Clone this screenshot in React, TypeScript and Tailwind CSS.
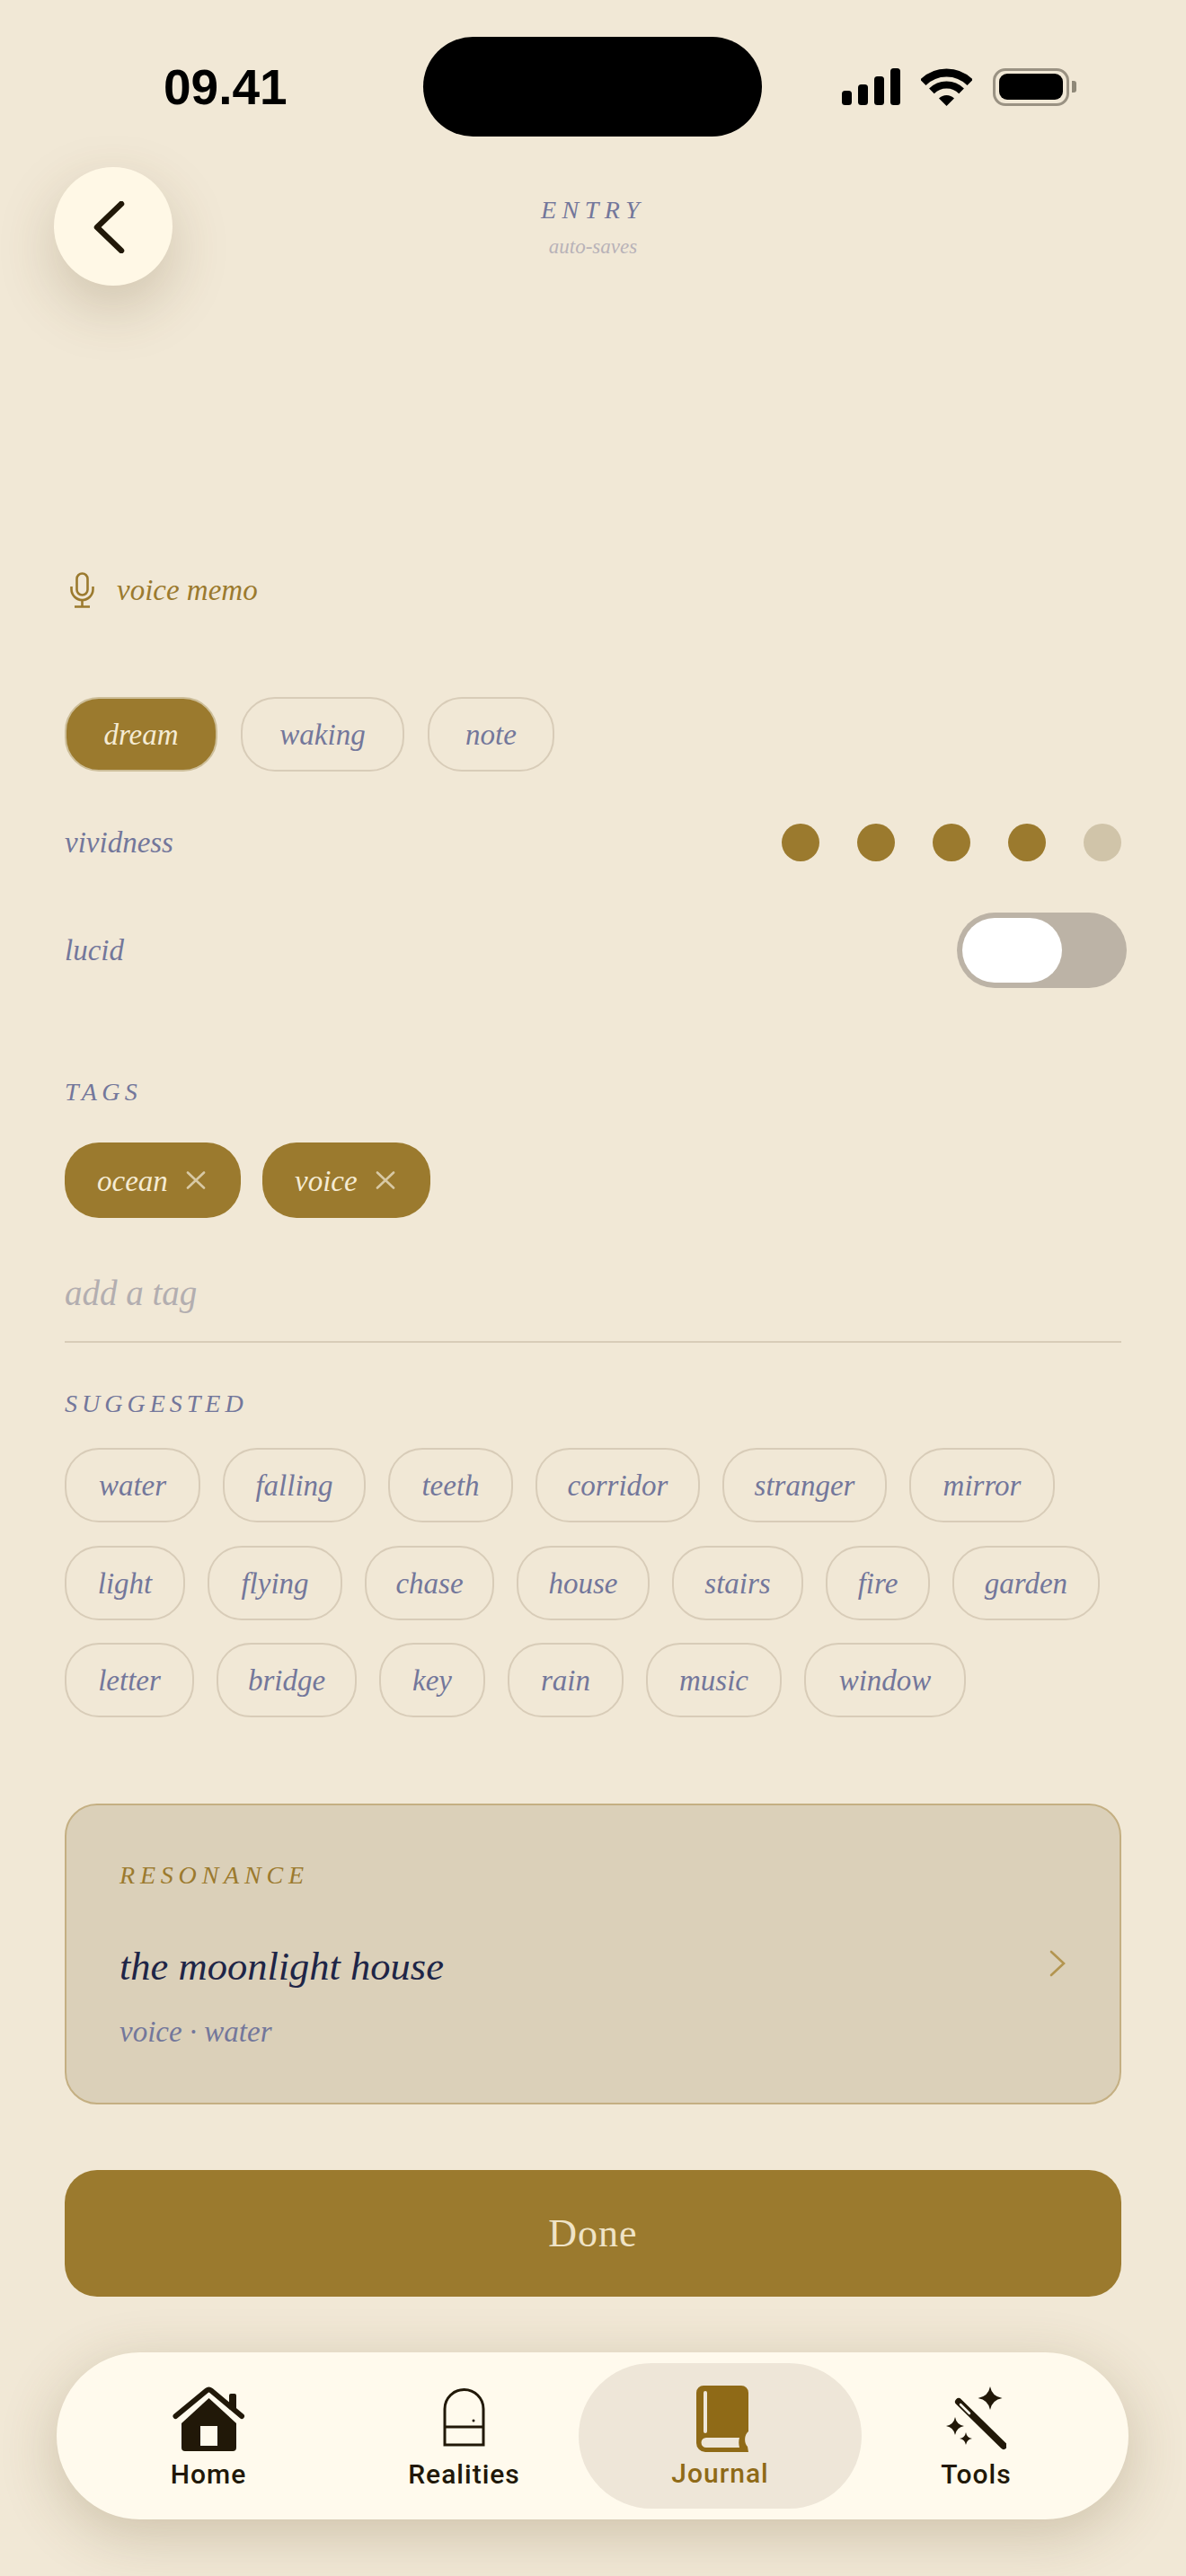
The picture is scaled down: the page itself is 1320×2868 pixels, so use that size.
const suggested = [
  [
    { label: "water", width: "w-[151px]" },
    { label: "falling", width: "w-[159px]" },
    { label: "teeth", width: "w-[139px]" },
    { label: "corridor", width: "w-[183px]" },
    { label: "stranger", width: "w-[183px]" },
    { label: "mirror", width: "w-[162px]" },
  ],
  [
    { label: "light", width: "w-[134px]" },
    { label: "flying", width: "w-[150px]" },
    { label: "chase", width: "w-[144px]" },
    { label: "house", width: "w-[148px]" },
    { label: "stairs", width: "w-[146px]" },
    { label: "fire", width: "w-[116px]" },
    { label: "garden", width: "w-[164px]" },
  ],
  [
    { label: "letter", width: "w-[144px]" },
    { label: "bridge", width: "w-[156px]" },
    { label: "key", width: "w-[118px]" },
    { label: "rain", width: "w-[129px]" },
    { label: "music", width: "w-[151px]" },
    { label: "window", width: "w-[180px]" },
  ],
];

const Chip = ({ label, width, active }: { label: string; width: string; active?: boolean }) => (
  <div
    className={`flex h-[83px] items-center justify-center rounded-[38px] border-2 pt-[3px] text-[33px] ${width} ${
      active ? "border-[#CDBE99] bg-[#9B7A2E] text-[#F5EBD3]" : "border-[#D8CCB8] text-[#73779B]"
    }`}
  >
    {label}
  </div>
);

const TagChip = ({ label, width }: { label: string; width: string }) => (
  <div className={`flex h-[84px] items-center justify-between rounded-[38px] bg-[#9B7A2E] pl-[36px] pr-[39px] text-[33px] text-[#F5EBD3] ${width}`}>
    <span className="pt-[3px]">{label}</span>
    <svg width="22" height="20" viewBox="0 0 22 20" fill="none" stroke="#D8C9A5" strokeWidth="2.6" strokeLinecap="round">
      <path d="M2 1.500 20 18.500M20 1.500 2 18.500" />
    </svg>
  </div>
);

const StatusBar = () => (
  <div className="flex h-[186px] items-start pl-[182px] pt-[41px]">
    <div className="flex h-[111px] w-[289px] items-center pt-[2px] font-['Liberation_Sans',sans-serif] text-[55px] font-bold not-italic text-black">
      09.41
    </div>
    <div className="h-[111px] w-[377px] rounded-full bg-black" />
    <div className="ml-[89px] flex h-[111px] items-center gap-[23px]">
      <svg width="65" height="41" viewBox="0 0 65 41" fill="#000">
        <rect x="0" y="25" width="11" height="16" rx="3.5" />
        <rect x="18" y="18" width="11" height="23" rx="3.5" />
        <rect x="36" y="9" width="11" height="32" rx="3.5" />
        <rect x="54" y="0" width="11" height="41" rx="3.5" />
      </svg>
      <svg width="57" height="42" viewBox="0 0 57 42" fill="none" stroke="#000">
        <path d="M2.3 15.8A37 37 0 0 1 54.7 15.8" strokeWidth="9" />
        <path d="M11.9 25.4A23.5 23.5 0 0 1 45.1 25.4" strokeWidth="8" />
        <path d="M28.5 42 20 33.5A12 12 0 0 1 37 33.5Z" fill="#000" stroke="none" />
      </svg>
      <div className="flex items-center">
        <div className="flex h-[42px] w-[85px] items-center justify-center rounded-[14px] border-[3px] border-[#9A9283]">
          <div className="h-[29px] w-[71px] rounded-[9px] bg-black" />
        </div>
        <div className="ml-[3px] h-[13px] w-[5px] rounded-r-[3px] bg-[#8F8878]" />
      </div>
    </div>
  </div>
);

const NavBar = () => (
  <div className="absolute left-[63px] top-[2619px] grid h-[186px] w-[1193px] grid-cols-[284px_285px_285px_285px] items-center rounded-[93px] bg-[#FFFAED] pl-[27px] font-['Roboto',sans-serif] text-[30px] font-medium not-italic leading-[36px] tracking-[1px] text-[#211808] shadow-[0_16px_64px_rgba(90,70,30,0.24)]">
    <div className="flex flex-col items-center pt-[6px]">
      <svg width="81" height="72" viewBox="0 0 81 72" fill="#211808">
        <path d="M40.5 13 71 41V68a4 4 0 0 1-4 4H14a4 4 0 0 1-4-4V41Z" />
        <path d="M3.500 33 40.500 4 77 33" fill="none" stroke="#FFFAED" strokeWidth="10" />
        <rect x="63" y="8" width="8" height="18" rx="2" />
        <path d="M3.500 33 38 4.500a4 4 0 0 1 5 0L77 33" fill="none" stroke="#211808" strokeWidth="6" strokeLinecap="round" />
        <rect x="31" y="44" width="19" height="22" fill="#FFFAED" />
      </svg>
      <span className="mt-[8px]">Home</span>
    </div>
    <div className="flex flex-col items-center pt-[6px]">
      <svg width="47" height="72" viewBox="0 0 47 72" fill="none" stroke="#211808" strokeWidth="3">
        <path d="M2 65V25a21.500 21.500 0 0 1 43 0V65Z" />
        <path d="M2 45H45" />
        <circle cx="34" cy="38" r="1.500" fill="#211808" stroke="none" />
      </svg>
      <span className="mt-[8px]">Realities</span>
    </div>
    <div className="-mx-[15px] flex h-[162px] flex-col items-center justify-center rounded-[81px] bg-[#EEE6D8] pt-[4px] text-[#8F6A17]">
      <svg className="ml-[5px]" width="58" height="74" viewBox="0 0 58 74" fill="#8F6A17">
        <path d="M8 0H50a8 8 0 0 1 8 8V51c-5 4-5 13-1 17l1 6H10A10 10 0 0 1 0 64V8A8 8 0 0 1 8 0Z" />
        <path d="M11 58H48c-1 3-1 7 0 11H11a5.500 5.500 0 0 1 0-11Z" fill="#EEE6D8" />
        <rect x="8" y="6" width="4" height="47" rx="2" fill="#EEE6D8" />
      </svg>
      <span className="mt-[6px]">Journal</span>
    </div>
    <div className="flex flex-col items-center pt-[6px]">
      <svg width="67" height="72" viewBox="0 0 67 72" fill="#211808">
        <path d="M14 17 64 66" stroke="#211808" strokeWidth="8" strokeLinecap="round" />
        <path d="M16 20 26 30" stroke="#FFFAED" strokeWidth="2.500" strokeLinecap="round" />
        <path d="M49 0Q51 11 62.500 13 51 15 49 26 47 15 35.500 13 47 11 49 0Z" />
        <path d="M10 34Q11.500 42.500 20 44 11.500 45.500 10 54 8.500 45.500 0 44 8.500 42.500 10 34Z" />
        <path d="M22 51Q23 57 29 58 23 59 22 65 21 59 15 58 21 57 22 51Z" />
      </svg>
      <span className="mt-[8px]">Tools</span>
    </div>
  </div>
);

export default function App() {
  return (
    <div className="relative h-[2868px] w-full overflow-hidden bg-[#F1E8D6] font-['Liberation_Serif',serif] italic">
      <StatusBar />

      <div className="grid h-[132px] grid-cols-[132px_1fr_132px] px-[60px]">
        <button className="flex h-[132px] w-[132px] items-center justify-center rounded-full bg-[#FFF8E6] pt-[2px] shadow-[0_24px_64px_rgba(90,70,30,0.22)]">
          <svg className="mr-[11px]" width="40" height="58" viewBox="0 0 40 58" fill="none" stroke="#211808" strokeWidth="6.500" strokeLinecap="round" strokeLinejoin="round">
            <path d="M34 3 7 29l27 26" />
          </svg>
        </button>
        <div className="flex flex-col items-center pt-[32px]">
          <div className="text-[28px] leading-[32px] tracking-[6.5px] text-[#73779B]">ENTRY</div>
          <div className="mt-[10px] text-[23px] leading-[30px] text-[#B8B2B8]">auto-saves</div>
        </div>
        <div />
      </div>

      <div className="px-[72px]">
        <div className="mt-[319px] flex h-[40px] items-center gap-[25px] pl-[6px] text-[33px] text-[#9B7A2E]">
          <svg width="27" height="40" viewBox="0 0 27 40" fill="none" stroke="#9B7A2E" strokeWidth="2.600">
            <rect x="7.500" y="1.500" width="12" height="24" rx="6" />
            <path d="M1.500 16v3a12 12 0 0 0 24 0v-3M13.500 31v7M5 38.500H22" />
          </svg>
          <span className="pt-[2px]">voice memo</span>
        </div>

        <div className="mt-[99px] flex gap-[26px]">
          <Chip label="dream" width="w-[170px]" active />
          <Chip label="waking" width="w-[182px]" />
          <Chip label="note" width="w-[141px]" />
        </div>

        <div className="mt-[37px] flex h-[84px] items-center justify-between text-[33px] text-[#73779B]">
          <span className="pt-[2px]">vividness</span>
          <div className="flex gap-[42px]">
            <div className="h-[42px] w-[42px] rounded-full bg-[#9B7A2E]" />
            <div className="h-[42px] w-[42px] rounded-full bg-[#9B7A2E]" />
            <div className="h-[42px] w-[42px] rounded-full bg-[#9B7A2E]" />
            <div className="h-[42px] w-[42px] rounded-full bg-[#9B7A2E]" />
            <div className="h-[42px] w-[42px] rounded-full bg-[#D0C4A9]" />
          </div>
        </div>

        <div className="mt-[36px] flex h-[84px] items-center justify-between text-[33px] text-[#73779B]">
          <span className="pt-[2px]">lucid</span>
          <div className="-mr-[6px] flex h-[84px] w-[189px] items-center rounded-full bg-[#BCB3A6] pl-[6px]">
            <div className="h-[72px] w-[111px] rounded-full bg-white" />
          </div>
        </div>

        <div className="mt-[104px] text-[28px] leading-[24px] tracking-[5.3px] text-[#73779B]">TAGS</div>
        <div className="mt-[44px] flex gap-[24px]">
          <TagChip label="ocean" width="w-[196px]" />
          <TagChip label="voice" width="w-[187px]" />
        </div>
        <div className="flex h-[139px] items-end border-b-2 border-[#D8CCB8] pb-[30px] text-[39px] leading-[46px] text-[#B3AEB0]">
          add a tag
        </div>

        <div className="mt-[56px] text-[28px] leading-[24px] tracking-[5px] text-[#73779B]">SUGGESTED</div>
        <div className="mt-[37px] flex flex-col gap-[25.5px]">
          {suggested.map((row, i) => (
            <div key={i} className="flex gap-[25px]">
              {row.map((c) => (
                <Chip key={c.label} label={c.label} width={c.width} />
              ))}
            </div>
          ))}
        </div>

        <div className="mt-[96px] flex h-[335px] items-start justify-between rounded-[36px] border-2 border-[#C4AF82] bg-[#DBD0B9] pl-[59px] pr-[60px] pt-[63px]">
          <div>
            <div className="text-[28px] leading-[30px] tracking-[5.8px] text-[#9B7A2E]">RESONANCE</div>
            <div className="mt-[58px] text-[44.500px] leading-[56px] text-[#1E2547]">the moonlight house</div>
            <div className="mt-[25px] text-[33px] leading-[40px] text-[#73779B]">voice · water</div>
          </div>
          <svg className="mt-[98px]" width="18" height="30" viewBox="0 0 18 30" fill="none" stroke="#B39550" strokeWidth="2.600" strokeLinecap="round">
            <path d="M2 2 16 15 2 28" />
          </svg>
        </div>

        <div className="mt-[73px] flex h-[141px] items-center justify-center rounded-[36px] bg-[#9B7A2E] text-[44px] not-italic tracking-[1px] text-[#EFE3C6]">
          Done
        </div>
      </div>

      <NavBar />
    </div>
  );
}
